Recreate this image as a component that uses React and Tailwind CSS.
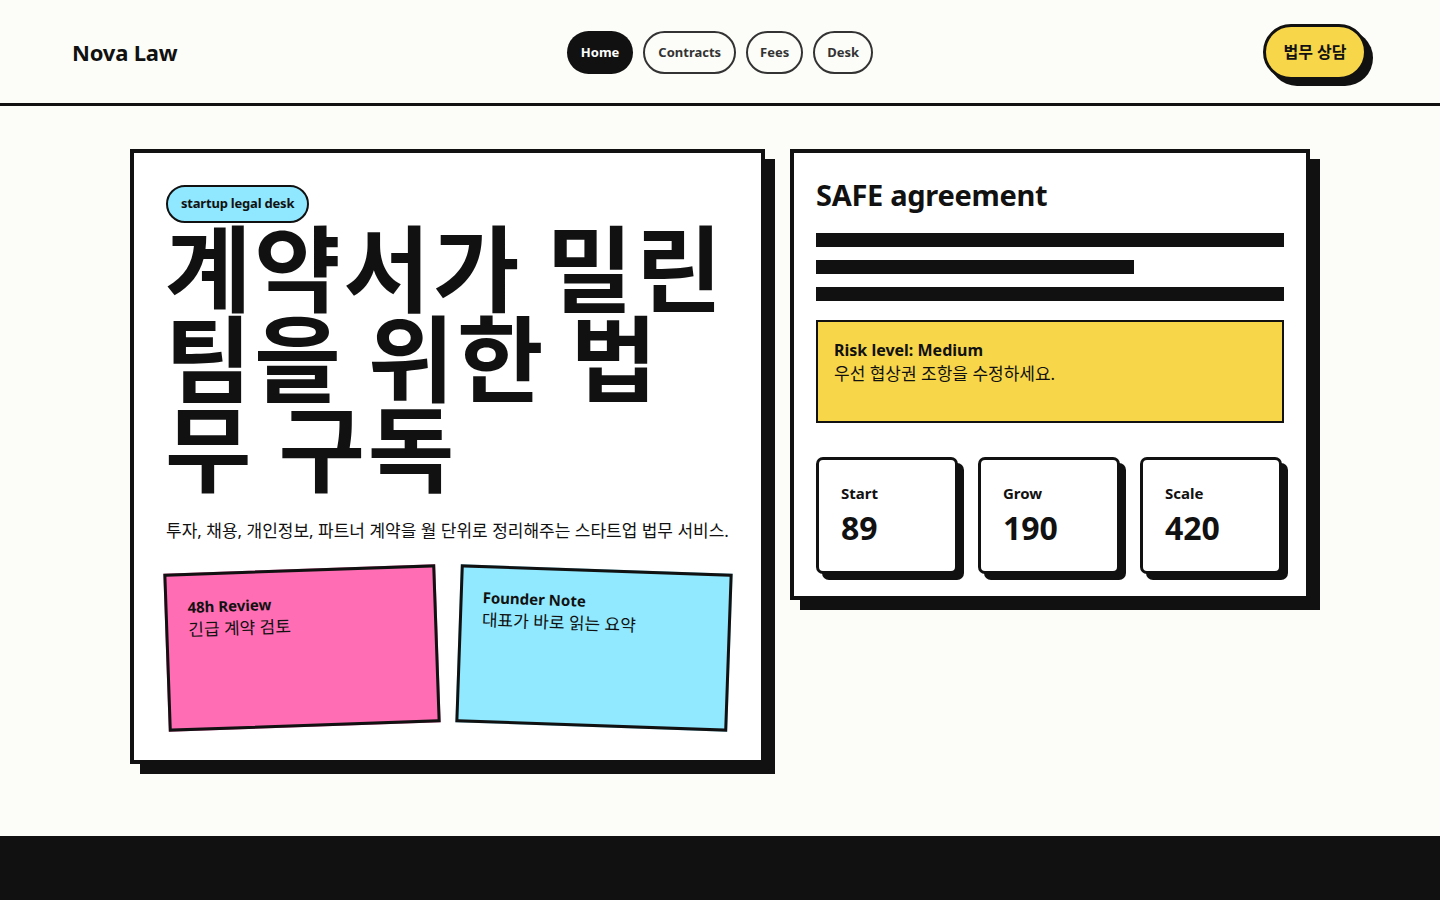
import React from "react";

const sans = "font-['Noto_Sans','Noto_Sans_CJK_KR',sans-serif]";

function Header() {
  return (
    <header className="h-[106px] pt-[2px] border-b-[3px] border-[#111] flex items-center justify-between px-[72px]">
      <div className="text-[22px] font-bold text-[#111] tracking-[-0.2px] w-[300px]">Nova Law</div>
      <nav className="flex items-center gap-[10px]">
        <a className="h-[43px] px-[14px] rounded-full bg-[#111] text-white text-[13px] font-bold flex items-center">Home</a>
        <a className="h-[43px] px-[13px] rounded-full border-2 border-[#333] text-[#333] text-[13px] font-bold flex items-center">Contracts</a>
        <a className="h-[43px] px-[12px] rounded-full border-2 border-[#333] text-[#333] text-[13px] font-bold flex items-center">Fees</a>
        <a className="h-[43px] px-[12px] rounded-full border-2 border-[#333] text-[#333] text-[13px] font-bold flex items-center">Desk</a>
      </nav>
      <div className="w-[300px] flex justify-end">
        <button className="h-[56px] w-[104px] rounded-full bg-[#F7D64A] border-[3px] border-[#111] shadow-[6px_6px_0_#111] text-[16px] font-bold text-[#111] mr-[1px] mb-[1px]">
          법무 상담
        </button>
      </div>
    </header>
  );
}

function HeroCard() {
  return (
    <section className="bg-white border-4 border-[#111] shadow-[10px_10px_0_#111] p-[32px] pb-[33px]">
      <span className="inline-flex items-center h-[38px] px-[13px] rounded-full bg-[#8FE8FF] border-2 border-[#111] text-[13px] font-bold text-[#111] tracking-[-0.2px]">
        startup legal desk
      </span>
      <h1 className="font-['Noto_Sans_CJK_KR',sans-serif] font-bold text-[94px] leading-[90px] tracking-[0.03em] text-[#111] mt-[-4px] ml-[-1px]">
        계약서가 밀린<br />팀을 위한 법<br />무 구독
      </h1>
      <p className="mt-[30px] text-[17px] leading-[24px] text-[#111] whitespace-nowrap">
        투자, 채용, 개인정보, 파트너 계약을 월 단위로 정리해주는 스타트업 법무 서비스.
      </p>
      <div className="mt-[26px] grid grid-cols-2 gap-[20px]">
        <div className="h-[158px] bg-[#FF6EB4] border-[3px] border-[#111] rotate-[-2deg] px-[20px] py-[20px]">
          <div className="text-[15px] font-bold text-[#111] leading-[22px]">48h Review</div>
          <div className="text-[17px] text-[#111] leading-[24px]">긴급 계약 검토</div>
        </div>
        <div className="h-[158px] bg-[#90E9FF] border-[3px] border-[#111] rotate-[2deg] px-[20px] py-[18px]">
          <div className="text-[15px] font-bold text-[#111] leading-[22px]">Founder Note</div>
          <div className="text-[17px] text-[#111] leading-[24px]">대표가 바로 읽는 요약</div>
        </div>
      </div>
    </section>
  );
}

function Plan({ name, price }) {
  return (
    <div className="h-[117px] rounded-[7px] border-[3px] border-[#111] bg-white shadow-[6px_6px_0_#111] px-[22px] pt-[22px]">
      <div className="text-[15px] font-bold text-[#111] leading-[22px]">{name}</div>
      <div className="text-[32px] font-bold text-[#111] leading-[40px] mt-[4px]">{price}</div>
    </div>
  );
}

function SafeCard() {
  return (
    <section className="self-start bg-white border-4 border-[#111] shadow-[10px_10px_0_#111] p-[22px]">
      <h2 className="text-[29px] font-bold text-[#111] leading-[40px] tracking-[-0.3px]">SAFE agreement</h2>
      <div className="mt-[18px] flex flex-col gap-[13px]">
        <div className="h-[14px] bg-[#111] w-full" />
        <div className="h-[14px] bg-[#111] w-[68%]" />
        <div className="h-[14px] bg-[#111] w-full" />
      </div>
      <div className="mt-[19px] h-[103px] bg-[#F7D64A] border-2 border-[#111] px-[16px] pt-[16px]">
        <div className="text-[16px] font-bold text-[#111] leading-[24px]">Risk level: Medium</div>
        <div className="text-[17px] text-[#111] leading-[24px]">우선 협상권 조항을 수정하세요.</div>
      </div>
      <div className="mt-[34px] grid grid-cols-3 gap-[20px] pr-[2px]">
        <Plan name="Start" price="89" />
        <Plan name="Grow" price="190" />
        <Plan name="Scale" price="420" />
      </div>
    </section>
  );
}

export default function App() {
  return (
    <div className={`${sans} min-h-screen bg-[#FCFDF8] text-[#111]`}>
      <Header />
      <main className="pt-[43px] pb-[72px] flex justify-center">
        <div className="grid grid-cols-[635px_520px] gap-[25px]">
          <HeroCard />
          <SafeCard />
        </div>
      </main>
      <footer className="h-[120px] bg-[#111]" />
    </div>
  );
}
